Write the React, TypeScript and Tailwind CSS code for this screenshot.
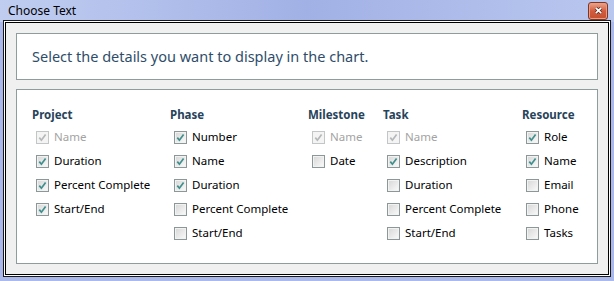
import React from "react"

type Item = { label: string; checked: boolean; disabled?: boolean }

interface Column {
  title: string
  width: string
  offset?: string
  items: Item[]
}

const columns: Column[] = [
  {
    title: "Project",
    width: "w-[138px]",
    items: [
      { label: "Name", checked: true, disabled: true },
      { label: "Duration", checked: true },
      { label: "Percent Complete", checked: true },
      { label: "Start/End", checked: true },
    ],
  },
  {
    title: "Phase",
    width: "w-[138px]",
    items: [
      { label: "Number", checked: true },
      { label: "Name", checked: true },
      { label: "Duration", checked: true },
      { label: "Percent Complete", checked: false },
      { label: "Start/End", checked: false },
    ],
  },
  {
    title: "Milestone",
    width: "w-[75px]",
    offset: "mt-[2px]",
    items: [
      { label: "Name", checked: true, disabled: true },
      { label: "Date", checked: false },
    ],
  },
  {
    title: "Task",
    width: "w-[139px]",
    items: [
      { label: "Name", checked: true, disabled: true },
      { label: "Description", checked: true },
      { label: "Duration", checked: false },
      { label: "Percent Complete", checked: false },
      { label: "Start/End", checked: false },
    ],
  },
  {
    title: "Resource",
    width: "flex-1",
    items: [
      { label: "Role", checked: true },
      { label: "Name", checked: true },
      { label: "Email", checked: false },
      { label: "Phone", checked: false },
      { label: "Tasks", checked: false },
    ],
  },
]

const CheckBox: React.FC<{ checked: boolean; disabled?: boolean }> = ({ checked, disabled }) => (
  <span
    className={
      disabled
        ? "relative w-[13px] h-[13px] shrink-0 border border-[#c2c6c6] bg-[#f4f4f4]"
        : "relative w-[13px] h-[13px] shrink-0 border border-[#8c9898] bg-gradient-to-br from-[#d6d6d6] to-[#fbfbfb] shadow-[inset_0_0_0_1px_#f2f2f2]"
    }
  >
    {checked && (
      <svg viewBox="0 0 11 11" className="absolute inset-0 w-[11px] h-[11px]">
        <path
          d="M2.3 5.6 L4.4 8.2 L8.6 2.4"
          fill="none"
          stroke={disabled ? "#b4b8b8" : "#3f8f8d"}
          strokeWidth="1.7"
        />
      </svg>
    )}
  </span>
)

export default function App() {
  return (
    <div
      className="w-[614px] h-[281px] bg-[#aab9ea] flex flex-col overflow-hidden"
      style={{ fontFamily: '"Noto Sans", "Open Sans", sans-serif' }}
    >
      <div className="h-[22px] shrink-0 flex items-center justify-between pl-[8px] pr-[6px] bg-gradient-to-r from-[#c0cdf1] via-[#a2b1e5] to-[#b9c7ef]">
        <span className="text-[12px] leading-none text-black">Choose Text</span>
        <span className="w-[20px] h-[18px] -mt-[1px] rounded-[3px] border border-[#7d3526] bg-gradient-to-b from-[#eba48c] via-[#d35c3f] to-[#c4502f] shadow-[inset_0_0_0_1px_#eb9c84] flex items-center justify-center">
          <svg viewBox="0 0 10 10" className="w-[9px] h-[9px]">
            <path d="M2 2 L8 8 M8 2 L2 8" stroke="#5a2418" strokeWidth="3.4" />
            <path d="M2 2 L8 8 M8 2 L2 8" stroke="#ffffff" strokeWidth="1.9" />
          </svg>
        </span>
      </div>

      <div className="ml-[5px] w-[604px] h-[253px] border border-black bg-[#f0f0f0] shadow-[0_0_0_1px_#ffffff,0_0_0_2px_#1a1a1a] flex flex-col gap-[9px] p-[10px]">
        <div className="h-[47px] shrink-0 bg-white border border-[#8e9c9c] flex items-center pl-[15px]">
          <span className="text-[14.5px] text-[#2f4d6a] mt-[1px]">Select the details you want to display in the chart.</span>
        </div>

        <div className="flex-1 bg-white border border-[#8e9c9c] flex pl-[15px] pt-[17px]">
          {columns.map((col) => (
            <div key={col.title} className={col.width}>
              <div className="h-[16px] mb-[2px] flex items-center text-[11.5px] font-bold text-[#27435a]">
                {col.title}
              </div>
              <div className={col.offset}>
                {col.items.map((it) => (
                  <div key={it.label} className="h-[24px] flex items-center gap-[5px] pl-[4px]">
                    <CheckBox checked={it.checked} disabled={it.disabled} />
                    <span className={it.disabled ? "text-[11.5px] text-[#a3a3a3]" : "text-[11.5px] text-black"}>
                      {it.label}
                    </span>
                  </div>
                ))}
              </div>
            </div>
          ))}
        </div>
      </div>
    </div>
  )
}
